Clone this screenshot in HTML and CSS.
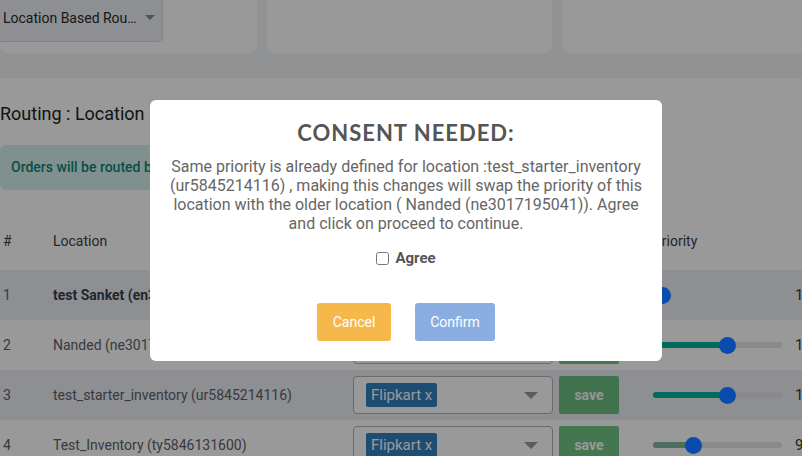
FILE: index.html
```html
<!DOCTYPE html>
<html lang="en">
  <head>
    <meta charset="UTF-8" />
    <meta name="viewport" content="width=device-width, initial-scale=1.0" />
    <title>Location Routing</title>
    <link rel="stylesheet" href="styles.css">
  </head>
  <body>
    <div class="top-cards">
      <div class="card">
        <div class="route-select">
          <span>Location Based Rou…</span>
          <span class="caret"></span>
        </div>
      </div>
      <div class="card"></div>
      <div class="card"></div>
    </div>

    <div class="panel">
      <h3 class="title">Routing : Location Based Routing</h3>
      <div class="alert">Orders will be routed based on the priority of the locations defined below</div>

      <div class="table">
        <div class="row head">
          <div class="cell">#</div>
          <div class="cell">Location</div>
          <div class="cell">Channels</div>
          <div class="cell"></div>
          <div class="cell">Priority</div>
          <div class="cell"></div>
        </div>

        <div class="row striped bold">
          <div class="cell">1</div>
          <div class="cell">test Sanket (en3016213409)</div>
          <div class="cell"><div class="channel-select"><span class="chip">Flipkart x</span><span class="caret"></span></div></div>
          <div class="cell"><button class="save">save</button></div>
          <div class="cell"><div class="track plain"><div class="fill" style="width: 7%"></div><span class="thumb" style="left: 7%"></span></div></div>
          <div class="cell num">10</div>
        </div>

        <div class="row">
          <div class="cell">2</div>
          <div class="cell">Nanded (ne3017195041)</div>
          <div class="cell"><div class="channel-select"><span class="chip">Flipkart x</span><span class="caret"></span></div></div>
          <div class="cell"><button class="save">save</button></div>
          <div class="cell"><div class="track"><div class="fill" style="width: 57%"></div><span class="thumb" style="left: 57%"></span></div></div>
          <div class="cell num">10</div>
        </div>

        <div class="row striped">
          <div class="cell">3</div>
          <div class="cell">test_starter_inventory (ur5845214116)</div>
          <div class="cell"><div class="channel-select"><span class="chip">Flipkart x</span><span class="caret"></span></div></div>
          <div class="cell"><button class="save">save</button></div>
          <div class="cell"><div class="track"><div class="fill" style="width: 57%"></div><span class="thumb" style="left: 57%"></span></div></div>
          <div class="cell num">10</div>
        </div>

        <div class="row">
          <div class="cell">4</div>
          <div class="cell">Test_Inventory (ty5846131600)</div>
          <div class="cell"><div class="channel-select"><span class="chip">Flipkart x</span><span class="caret"></span></div></div>
          <div class="cell"><button class="save">save</button></div>
          <div class="cell"><div class="track"><div class="fill muted" style="width: 31%"></div><span class="thumb" style="left: 31%"></span></div></div>
          <div class="cell num">9</div>
        </div>
      </div>
    </div>

    <div class="overlay"></div>

    <div class="modal">
      <h2>CONSENT NEEDED:</h2>
      <p>
        Same priority is already defined for location :test_starter_inventory (ur5845214116) , making this changes will swap the priority of this location with the older location ( Nanded (ne3017195041)). Agree and click on proceed to continue.
      </p>
      <label class="agree"><input type="checkbox" /> Agree</label>
      <div class="actions">
        <button class="btn cancel">Cancel</button>
        <button class="btn confirm">Confirm</button>
      </div>
    </div>
  </body>
</html>
```

FILE: styles.css
```css
* {
  box-sizing: border-box;
}

body {
  margin: 0;
  width: 802px;
  height: 456px;
  overflow: hidden;
  background: #f2f3f7;
  font-family: Roboto, "Liberation Sans", sans-serif;
  color: #333;
}

.top-cards {
  display: grid;
  grid-template-columns: 257px 285px 250px;
  gap: 10px;
  height: 53px;
}

.card {
  background: #fff;
  border-radius: 0 0 8px 8px;
}

.route-select {
  display: flex;
  align-items: center;
  gap: 8px;
  width: 163px;
  height: 42px;
  padding: 0 0 6px 3px;
  background: #eceff4;
  border: 1px solid #d9dde4;
  border-left: none;
  border-top: none;
  border-radius: 0 0 5px 0;
  font-size: 14px;
  color: #2a2a2a;
  white-space: nowrap;
}

.caret {
  width: 0;
  height: 0;
  border-left: 5px solid transparent;
  border-right: 5px solid transparent;
  border-top: 5px solid #8a8a8a;
}

.panel {
  margin-top: 25px;
  background: #fff;
  height: 400px;
  padding-top: 25px;
}

.title {
  margin: 0 0 20px;
  font-size: 18px;
  font-weight: 400;
  line-height: 22px;
  color: #222;
}

.alert {
  width: 620px;
  height: 45px;
  line-height: 45px;
  padding: 0 11px;
  background: #d5f1ee;
  border-radius: 6px;
  color: #0c8475;
  font-size: 14px;
  font-weight: 500;
  white-space: nowrap;
  overflow: hidden;
}

.table {
  margin-top: 25px;
}

.row {
  display: grid;
  grid-template-columns: 50px 300px 206px 94px 142px 1fr;
  align-items: center;
  height: 50px;
  font-size: 14px;
  color: #5d626c;
}

.row.head {
  height: 55px;
  align-items: start;
  padding-top: 18px;
  color: #3d4049;
}

.row.striped {
  background: #eceef3;
}

.row.bold .cell:nth-child(2) {
  font-weight: 700;
  color: #3a3f4a;
}

.cell {
  padding: 0 3px;
  white-space: nowrap;
}

.channel-select {
  display: flex;
  align-items: center;
  justify-content: space-between;
  width: 200px;
  height: 38px;
  padding: 0 14px 0 12px;
  border: 1px solid #b3b3b3;
  border-radius: 4px;
  background: #fff;
}

.channel-select .caret {
  border-left-width: 7px;
  border-right-width: 7px;
  border-top: 7px solid #999;
}

.chip {
  background: #3380c2;
  color: #fff;
  font-size: 15px;
  line-height: 18px;
  padding: 3px 5px;
  border-radius: 2px;
}

.save {
  width: 60px;
  height: 38px;
  border: none;
  border-radius: 2px;
  background: #28a745;
  color: #fff;
  font-family: inherit;
  font-size: 14px;
  font-weight: 700;
  opacity: 0.65;
}

.track {
  position: relative;
  width: 129px;
  height: 6px;
  border-radius: 3px;
  background: #e6e6e6;
}

.track.plain {
  background: transparent;
}

.fill {
  height: 100%;
  border-radius: 3px;
  background: #00b29c;
}

.fill.muted {
  background: #80b89e;
}

.thumb {
  position: absolute;
  top: 50%;
  width: 17px;
  height: 17px;
  margin: -8px 0 0 -8px;
  border-radius: 50%;
  background: #0a4cae;
  z-index: 15;
}

.num {
  padding-left: 3px;
  font-size: 15px;
  color: #333;
}

.overlay {
  position: fixed;
  inset: 0;
  background: rgba(0, 0, 0, 0.4);
  z-index: 10;
}

.modal {
  position: fixed;
  left: 150px;
  top: 100px;
  width: 512px;
  height: 261px;
  padding: 20px 18px 20px;
  background: #fff;
  border-radius: 6px;
  text-align: center;
  z-index: 20;
}

.modal h2 {
  margin: 0;
  font-family: Lato, "Open Sans", sans-serif;
  font-size: 22px;
  font-weight: 700;
  letter-spacing: 1px;
  line-height: 26px;
  color: #555;
}

.modal p {
  margin: 11px 0 0;
  font-size: 16px;
  line-height: 19px;
  color: #666;
}

.agree {
  display: inline-flex;
  align-items: center;
  gap: 6px;
  margin-top: 16px;
  font-size: 15px;
  font-weight: 700;
  color: #555;
}

.agree input {
  margin: 0;
  width: 13px;
  height: 13px;
}

.actions {
  display: flex;
  justify-content: center;
  gap: 24px;
  margin-top: 34px;
}

.btn {
  height: 38px;
  border: none;
  border-radius: 3px;
  color: #fff;
  font-family: inherit;
  font-size: 14px;
}

.cancel {
  width: 74px;
  background: #f6b84a;
}

.confirm {
  width: 80px;
  background: #8aaee2;
}
```
